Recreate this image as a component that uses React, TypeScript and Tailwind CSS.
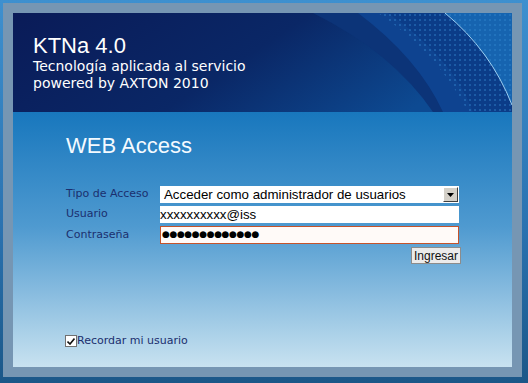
import React from 'react';

const HeaderArt: React.FC = () => (
  <svg className="absolute inset-0" width="499" height="99" viewBox="0 0 499 99">
    <defs>
      <linearGradient id="hdrBg" x1="0" y1="0" x2="1" y2="0.3">
        <stop offset="0" stopColor="#0a1b58" />
        <stop offset="0.55" stopColor="#0a2766" />
        <stop offset="1" stopColor="#0d4a92" />
      </linearGradient>
      <pattern id="dots" width="5" height="5" patternUnits="userSpaceOnUse">
        <rect x="1" y="1" width="2" height="2" fill="#3b95dc" />
      </pattern>
    </defs>
    <rect width="499" height="99" fill="url(#hdrBg)" />
    {/* swoosh bands */}
    <path d="M300 0 Q380 40 420 99 L499 99 L499 0 Z" fill="#0c3478" />
    <path d="M345 0 Q405 45 430 99 L499 99 L499 0 Z" fill="#0e4390" />
    <path d="M375 0 Q440 45 460 99 L499 99 L499 0 Z" fill="#0b3c88" />
    <path d="M365 0 Q425 40 455 99 L499 99 L499 0 Z" fill="url(#dots)" opacity="0.35" />
    <path d="M432 0 Q478 38 499 92 L499 0 Z" fill="#1664b0" />
    <path d="M432 0 Q478 38 499 92 L499 0 Z" fill="url(#dots)" opacity="0.3" />
    <path d="M432 0 Q478 38 499 92" fill="none" stroke="#9dd0f3" strokeWidth="1" />
  </svg>
);

const App: React.FC = () => {
  return (
    <div className="w-[528px] h-[383px] bg-[linear-gradient(to_bottom,#3e90cf,#2a72b0_60%,#1b5788)] pt-[3px] pl-[3px]">
      <div className="w-[519px] h-[374px] border-[10px] border-[#7696b3] flex flex-col">
        {/* Header */}
        <header className="relative h-[99px] shrink-0 overflow-hidden pl-[20px] pt-[22px] text-white">
          <HeaderArt />
          <div className="relative">
            <h1 className="text-[22px] leading-[22px] font-['Liberation_Sans',Arial,sans-serif]">KTNa 4.0</h1>
            <p className="mt-[1px] text-[14px] leading-[17px] font-['DejaVu_Sans',Verdana,sans-serif]">
              Tecnología aplicada al servicio
              <br />
              powered by AXTON 2010
            </p>
          </div>
        </header>

        {/* Body */}
        <main className="flex-1 bg-[linear-gradient(to_bottom,#1877bd,#4f9ad0_45%,#c8e2f0)] pl-[53px] pt-[23px]">
          <h2 className="text-[22px] leading-[22px] text-[#f4faff] font-['Liberation_Sans',Arial,sans-serif]">WEB Access</h2>

          <div className="mt-[29px] grid grid-cols-[94px_299px] gap-y-[3px] items-center text-[11px] text-[#1b2f6e] font-['DejaVu_Sans',Verdana,sans-serif]">
            <label>Tipo de Acceso</label>
            <div className="h-[17px] bg-white flex items-center justify-between pl-[4px] pr-[1px] font-['Liberation_Sans',Arial,sans-serif] text-[13.3px] text-black">
              <span>Acceder como administrador de usuarios</span>
              <span className="w-[15px] h-[15px] bg-[#d4d0c8] border border-t-white border-l-white border-r-[#404040] border-b-[#404040] flex items-center justify-center">
                <svg width="7" height="4" viewBox="0 0 7 4">
                  <path d="M0 0 H7 L3.5 4 Z" fill="#000" />
                </svg>
              </span>
            </div>

            <label>Usuario</label>
            <div className="h-[17px] bg-white flex items-center font-['Liberation_Sans',Arial,sans-serif] text-[13.3px] text-black">
              xxxxxxxxxx@iss
            </div>

            <label>Contraseña</label>
            <div className="h-[18px] bg-[#fffaf8] border border-[#c4532c] flex items-center pl-[1px] font-['DejaVu_Sans',sans-serif] text-[9px] tracking-[-0.4px] text-black">
              ●●●●●●●●●●●●●
            </div>

            <span />
            <div className="flex justify-end">
              <button className="h-[17px] w-[50px] mr-[-2px] bg-[#ebebeb] border border-[#8c8c8c] text-[12px] leading-none text-[#111] font-['Liberation_Sans',Arial,sans-serif]">
                Ingresar
              </button>
            </div>
          </div>

          <label className="mt-[69px] ml-[-1px] flex items-center text-[11px] text-[#1b2f6e] font-['DejaVu_Sans',Verdana,sans-serif]">
            <span className="w-[12px] h-[12px] bg-white border border-[#707070] flex items-center justify-center">
              <svg width="8" height="7" viewBox="0 0 8 7">
                <path d="M0.5 3.5 L3 6 L7.5 0.5" fill="none" stroke="#111" strokeWidth="1.6" />
              </svg>
            </span>
            <span>Recordar mi usuario</span>
          </label>
        </main>
      </div>
    </div>
  );
};

export default App;
